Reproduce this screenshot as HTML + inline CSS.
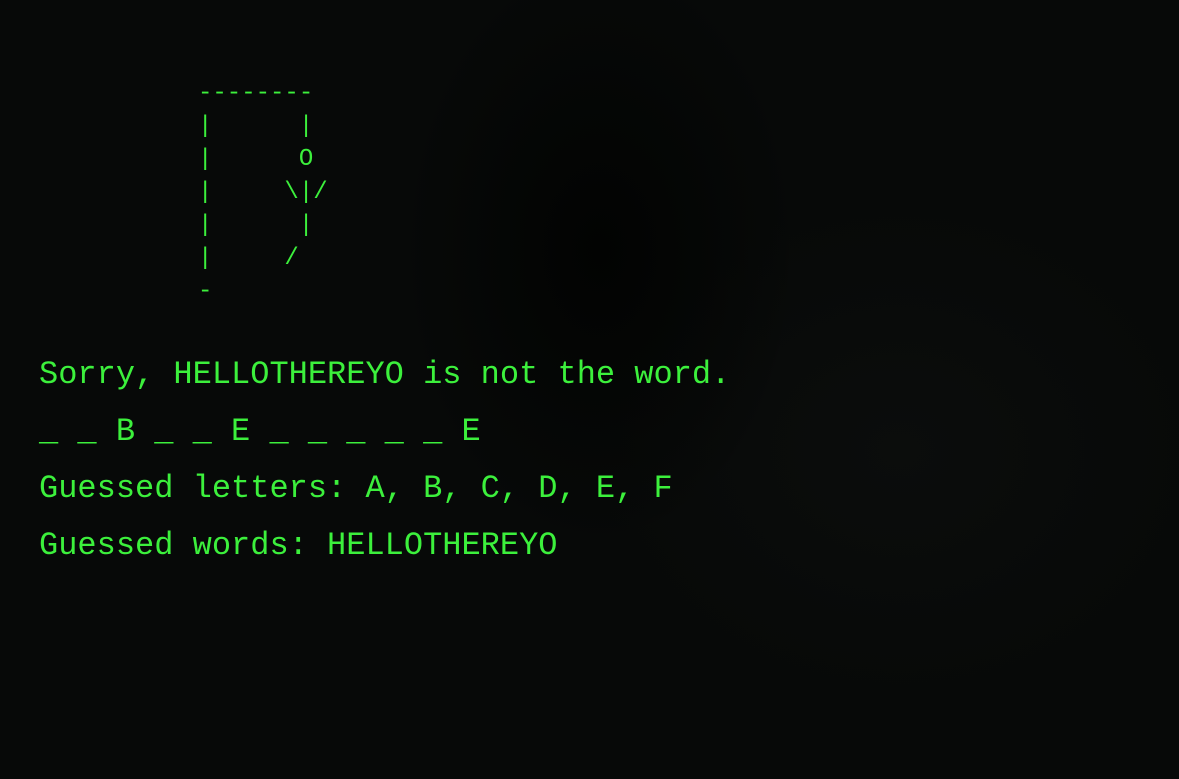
<!DOCTYPE html>
<html><head><style>
html,body{margin:0;padding:0;width:1179px;height:779px;overflow:hidden;background:#070908;}
body{position:relative;font-family:"Liberation Mono",monospace;color:#3cf03c;}
.bg{position:absolute;inset:0;background:radial-gradient(ellipse 200px 300px at 600px 250px,#020302,transparent),radial-gradient(ellipse 300px 250px at 900px 450px,#0b0d0c,transparent);}
pre{position:absolute;left:198px;top:77px;margin:0;font-size:24px;line-height:33px;font-family:"Liberation Mono",monospace;}
.t{position:absolute;left:39px;margin:0;font-size:32px;line-height:40px;white-space:pre;}
</style></head><body>
<div class="bg"></div>
<pre>--------
|      |
|      O
|     \|/
|      |
|     /
-</pre>
<div class="t" style="top:355px">Sorry, HELLOTHEREYO is not the word.</div>
<div class="t" style="top:412px">_ _ B _ _ E _ _ _ _ _ E</div>
<div class="t" style="top:469px">Guessed letters: A, B, C, D, E, F</div>
<div class="t" style="top:526px">Guessed words: HELLOTHEREYO</div>
</body></html>
